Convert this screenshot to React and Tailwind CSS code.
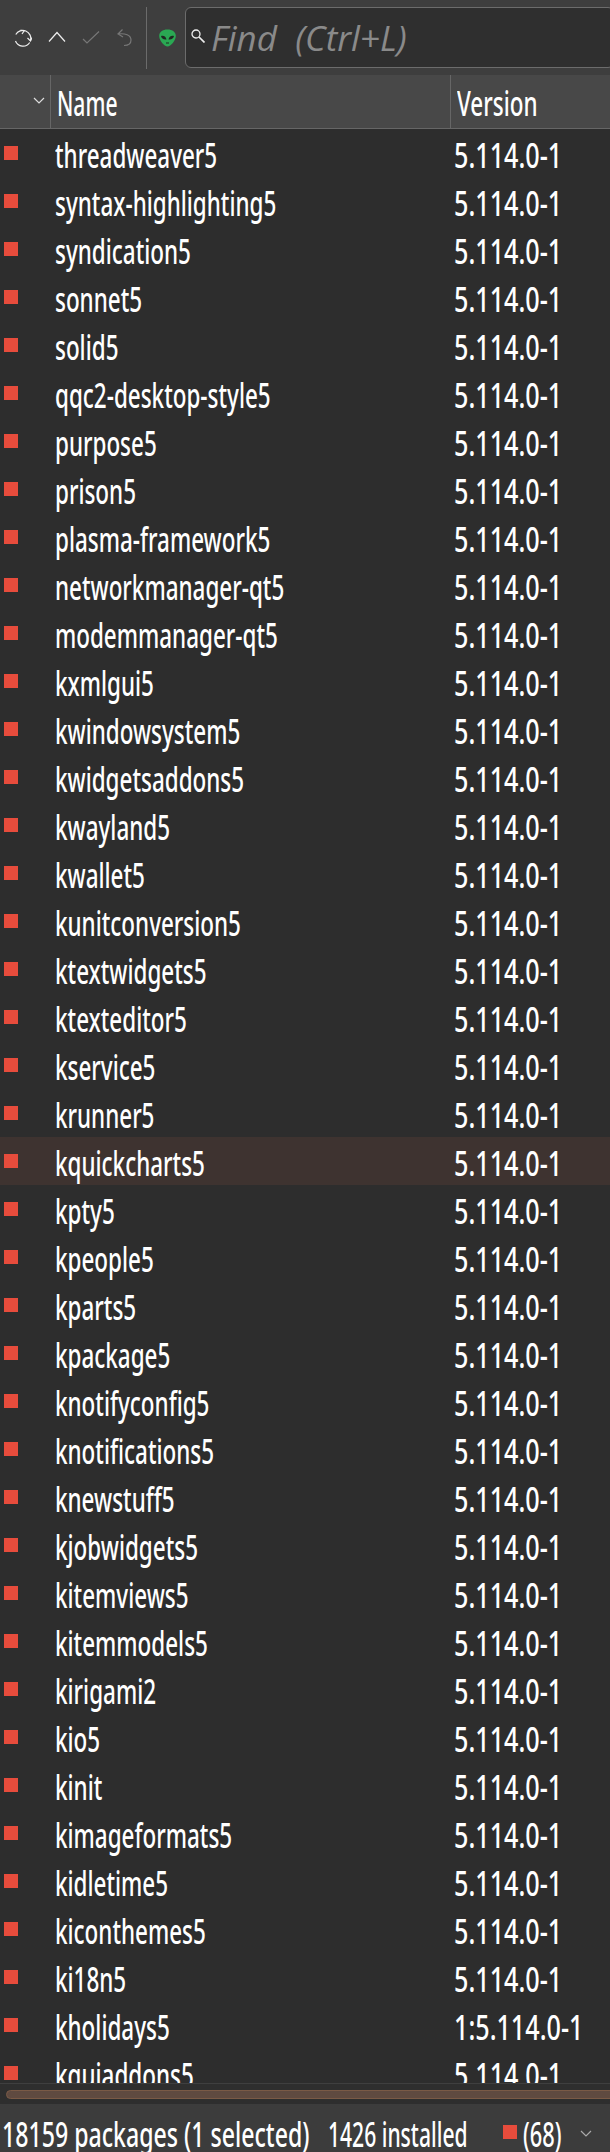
const rows = [
  ["threadweaver5","5.114.0-1"],["syntax-highlighting5","5.114.0-1"],["syndication5","5.114.0-1"],["sonnet5","5.114.0-1"],["solid5","5.114.0-1"],["qqc2-desktop-style5","5.114.0-1"],["purpose5","5.114.0-1"],["prison5","5.114.0-1"],["plasma-framework5","5.114.0-1"],["networkmanager-qt5","5.114.0-1"],["modemmanager-qt5","5.114.0-1"],["kxmlgui5","5.114.0-1"],["kwindowsystem5","5.114.0-1"],["kwidgetsaddons5","5.114.0-1"],["kwayland5","5.114.0-1"],["kwallet5","5.114.0-1"],["kunitconversion5","5.114.0-1"],["ktextwidgets5","5.114.0-1"],["ktexteditor5","5.114.0-1"],["kservice5","5.114.0-1"],["krunner5","5.114.0-1"],["kquickcharts5","5.114.0-1"],["kpty5","5.114.0-1"],["kpeople5","5.114.0-1"],["kparts5","5.114.0-1"],["kpackage5","5.114.0-1"],["knotifyconfig5","5.114.0-1"],["knotifications5","5.114.0-1"],["knewstuff5","5.114.0-1"],["kjobwidgets5","5.114.0-1"],["kitemviews5","5.114.0-1"],["kitemmodels5","5.114.0-1"],["kirigami2","5.114.0-1"],["kio5","5.114.0-1"],["kinit","5.114.0-1"],["kimageformats5","5.114.0-1"],["kidletime5","5.114.0-1"],["kiconthemes5","5.114.0-1"],["ki18n5","5.114.0-1"],["kholidays5","1:5.114.0-1"],["kguiaddons5","5.114.0-1"],
];

function Cond({ children, className = "" }) {
  return <span className={"inline-block origin-left whitespace-nowrap font-['Noto_Sans',sans-serif] font-medium text-[34px] " + className}>{children}</span>;
}

export default function App() {
  return (
    <div className="w-[610px] h-[2152px] flex flex-col overflow-hidden bg-[#2d2d2d] text-white">
      <div className="h-[75px] shrink-0 bg-[#3e3e3e] flex items-center">
        <div className="w-[146px] flex items-center shrink-0 pl-[14px] gap-[16px]">
          <svg width="18" height="18" viewBox="0 0 18 18" fill="none" stroke="#eee" strokeWidth="1.2" className="shrink-0"><path d="M1.800 5.500A8 8 0 0 1 16.500 11.500M15.700 13.500A8 8 0 0 1 1.500 12"/><path d="M13.500 9l3 3 1.500-3.500"/><path d="M6.500 1l3.500 1-2 3"/></svg>
          <svg width="18" height="18" viewBox="0 0 18 18" fill="none" stroke="#eee" strokeWidth="1.2" className="shrink-0"><path d="M1 12.500L9 3.500l8 9"/></svg>
          <svg width="18" height="18" viewBox="0 0 18 18" fill="none" stroke="#777" strokeWidth="1.2" className="shrink-0"><path d="M1 10l4 4L17 2.500"/></svg>
          <svg width="18" height="18" viewBox="0 0 18 18" fill="none" stroke="#777" strokeWidth="1.2" className="shrink-0"><path d="M6.500.5L2 5l5 3M2 5c7-1 13 1 13 6 0 3.500-3 5.500-7 5.500"/></svg>
        </div>
        <div className="w-px h-[62px] bg-[#6b6b6b] shrink-0"></div>
        <svg width="17" height="18" viewBox="0 0 17 18" className="ml-[12px] shrink-0"><path d="M8.500.5C3.500.5.200 3 .200 7c0 4.500 5 10.500 8.300 10.500S16.800 11.500 16.800 7c0-4-3.300-6.500-8.300-6.500z" fill="#2aa853"/><path d="M2 7c3-.8 5 .8 5.500 3.500C4.500 11 2.500 9.500 2 7zM15 7c-3-.8-5 .8-5.500 3.500C12.500 11 14.500 9.500 15 7z" fill="#1f2a22"/><path d="M7 14h3" stroke="#1f2a22" strokeWidth="1"/></svg>
        <div className="ml-[9px] h-[61px] flex-1 -mr-[4px] border border-[#6c6c6c] rounded-[6px] bg-[#2f2f2f] flex items-center">
          <svg width="14" height="14" viewBox="0 0 14 14" fill="none" stroke="#eee" strokeWidth="1.3" className="ml-[5px] shrink-0 -mt-[3px]"><circle cx="5" cy="5" r="4"/><path d="M8 8l5.500 5.500" strokeWidth="1.700"/></svg>
          <span className="ml-[6px] mt-[2px] font-['Open_Sans',sans-serif] italic text-[35px] text-[#8a8a8a] whitespace-pre">Find  (Ctrl+L)</span>
        </div>
      </div>
      <div className="h-[54px] shrink-0 flex bg-[#484848] border-b border-[#666]">
        <div className="w-[51px] shrink-0 border-r border-[#666] flex items-center justify-end pr-[5px]">
          <svg width="12" height="8" viewBox="0 0 12 8" fill="none" stroke="#ddd" strokeWidth="1.2" className="mt-[-2px]"><path d="M1 1l5 5 5-5"/></svg>
        </div>
        <div className="w-[400px] shrink-0 border-r border-[#666] pl-[6px] flex items-center"><Cond className="scale-x-[0.62] mt-[3px]">Name</Cond></div>
        <div className="flex-1 pl-[6px] flex items-center"><Cond className="scale-x-[0.66] mt-[3px]">Version</Cond></div>
      </div>
      <div className="h-[1954px] shrink-0 overflow-hidden">
        {rows.map(([n, v]) => (
          <div key={n} className={"h-[48px] flex items-center " + (n === "kquickcharts5" ? "bg-[#3e3330]" : "")}>
            <div className="w-[55px] shrink-0 pl-[4px]"><div className="w-[14px] h-[14px] bg-[#e74c3c]"></div></div>
            <div className="w-[399px] shrink-0 mt-[5px]"><Cond className="scale-x-[0.66]">{n}</Cond></div>
            <div className="mt-[5px]"><Cond className="scale-x-[0.74]">{v}</Cond></div>
          </div>
        ))}
      </div>
      <div className="h-[21px] shrink-0 bg-[#2e2e2e] border-t border-[#3f3f3f] flex items-center pl-[6px]">
        <div className="h-[9px] flex-1 -mr-[20px] rounded-full bg-[#5f4a40] border border-[#7a5a46]"></div>
      </div>
      <div className="flex-1 bg-[#3c3c3c] flex items-center overflow-hidden">
        <div className="w-[328px] shrink-0 pl-[2px] mt-[12px]"><Cond className="scale-x-[0.68]">18159 packages (1 selected)</Cond></div>
        <div className="w-[175px] shrink-0 mt-[12px]"><Cond className="scale-x-[0.62]">1426 installed</Cond></div>
        <div className="w-[14px] h-[14px] bg-[#e74c3c] shrink-0 mt-[8px]"></div>
        <div className="pl-[6px] w-[63px] shrink-0 mt-[12px]"><Cond className="scale-x-[0.64]">(68)</Cond></div>
        <svg width="12" height="8" viewBox="0 0 12 8" fill="none" stroke="#aaa" strokeWidth="1.2" className="mt-[12px]"><path d="M1 1l5 5 5-5"/></svg>
      </div>
    </div>
  );
}
